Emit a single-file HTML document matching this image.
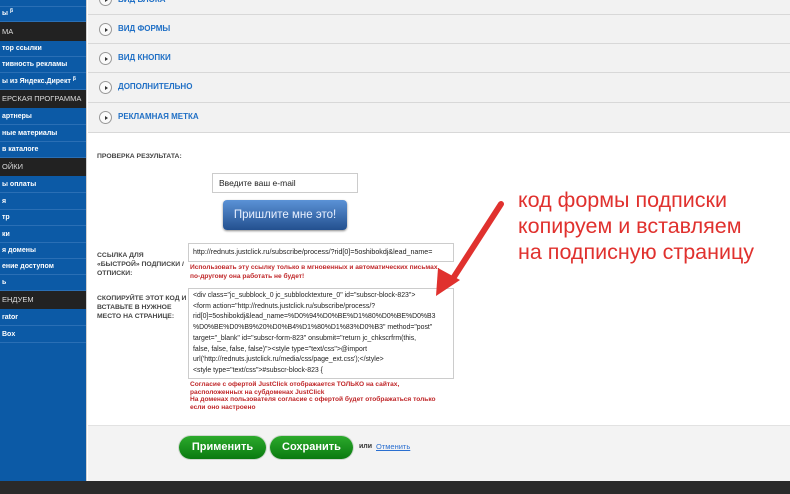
<!DOCTYPE html>
<html><head><meta charset="utf-8"><style>
*{margin:0;padding:0;box-sizing:border-box}
body{width:790px;height:494px;overflow:hidden;background:#fff;font-family:"Liberation Sans","Noto Sans CJK SC",sans-serif;position:relative}
.sb{position:absolute;left:0;top:0;width:87px;height:481px;background:#0c5aa6;border-right:1px solid #d0d0d0}
.sb div{position:absolute;left:0;width:86px;font-size:7px;font-weight:bold;color:#fff;padding-left:2px;white-space:nowrap;overflow:hidden;border-bottom:1px solid #2a6fb5}
.sb .h{background:#222;color:#ddd;font-size:7.5px;font-weight:normal;border-bottom:none}
.sb i{font-style:normal;font-size:5px;position:relative;top:-3px}
.acc{position:absolute;left:88px;width:702px;background:#f2f2f2;border-bottom:1px solid #d8d8d8}
.acc span.c{position:absolute;left:11px;width:13px;height:13px;border:1px solid #999;border-radius:50%;background:#fafafa}
.acc span.c:after{content:"";position:absolute;left:5px;top:3.5px;border-left:3px solid #333;border-top:2px solid transparent;border-bottom:2px solid transparent}
.acc b{position:absolute;left:30px;font-size:8px;color:#1f6fc5}
.lbl{position:absolute;font-size:6.8px;font-weight:bold;color:#444;line-height:9px;white-space:nowrap}
.red{position:absolute;font-size:7px;font-weight:bold;color:#c0282a;line-height:9px;white-space:nowrap}
.ta{position:absolute;background:#fff;border:1px solid #ccc;font-size:7.1px;color:#222;line-height:11px;padding:2px 4px;overflow:hidden;white-space:nowrap}
.gb{position:absolute;top:436px;height:23px;border-radius:12px;background:linear-gradient(#2caa2c,#0a7a10);color:#fff;font-weight:bold;font-size:11px;text-align:center;line-height:23px;box-shadow:0 0 0 1px #cfd8cf}
</style></head><body>
<div class="sb">
<div style="top:-2px;height:9px"></div>
<div style="top:7px;height:15px;line-height:14px">ы <i>β</i></div>
<div class="h" style="top:22px;height:19px;line-height:19px">МА</div>
<div style="top:41px;height:16px;line-height:16px">тор ссылки</div>
<div style="top:57px;height:16px;line-height:16px">тивность рекламы</div>
<div style="top:73px;height:17px;line-height:17px">ы из Яндекс.Директ <i>β</i></div>
<div class="h" style="top:90px;height:18px;line-height:18px">ЕРСКАЯ ПРОГРАММА</div>
<div style="top:108px;height:17px;line-height:17px">артнеры</div>
<div style="top:125px;height:17px;line-height:17px">ные материалы</div>
<div style="top:142px;height:16px;line-height:16px">в каталоге</div>
<div class="h" style="top:158px;height:18px;line-height:18px">ОЙКИ</div>
<div style="top:176px;height:17px;line-height:17px">ы оплаты</div>
<div style="top:193px;height:17px;line-height:17px">я</div>
<div style="top:210px;height:16px;line-height:16px">тр</div>
<div style="top:226px;height:17px;line-height:17px">ки</div>
<div style="top:243px;height:16px;line-height:16px">я домены</div>
<div style="top:259px;height:16px;line-height:16px">ение доступом</div>
<div style="top:275px;height:16px;line-height:16px">ь</div>
<div class="h" style="top:291px;height:18px;line-height:18px">ЕНДУЕМ</div>
<div style="top:309px;height:17px;line-height:17px">rator</div>
<div style="top:326px;height:17px;line-height:17px">Box</div>
</div>

<div class="acc" style="top:-15px;height:30px"><span class="c" style="top:8px"></span><b style="top:10px">ВИД БЛОКА</b></div>
<div class="acc" style="top:15px;height:29px"><span class="c" style="top:8px"></span><b style="top:9px">ВИД ФОРМЫ</b></div>
<div class="acc" style="top:44px;height:29px"><span class="c" style="top:8px"></span><b style="top:9px">ВИД КНОПКИ</b></div>
<div class="acc" style="top:73px;height:30px"><span class="c" style="top:8px"></span><b style="top:9px">ДОПОЛНИТЕЛЬНО</b></div>
<div class="acc" style="top:103px;height:30px"><span class="c" style="top:8px"></span><b style="top:9px">РЕКЛАМНАЯ МЕТКА</b></div>

<div class="lbl" style="left:97px;top:152px">ПРОВЕРКА РЕЗУЛЬТАТА:</div>
<div style="position:absolute;left:212px;top:173px;width:146px;height:20px;border:1px solid #ccc;font-size:8.5px;line-height:18px;padding-left:6px;color:#222">Введите ваш e-mail</div>
<div style="position:absolute;left:223px;top:200px;width:124px;height:30px;border-radius:4px;background:linear-gradient(#5b92d6,#23508f);color:#e8f0ff;font-size:11.5px;text-align:center;line-height:30px;box-shadow:0 1px 2px #888">Пришлите мне это!</div>

<div class="lbl" style="left:97px;top:251px">ССЫЛКА ДЛЯ<br>«БЫСТРОЙ» ПОДПИСКИ /<br>ОТПИСКИ:</div>
<div class="ta" style="left:188px;top:243px;width:266px;height:19px;line-height:13px">http://rednuts.justclick.ru/subscribe/process/?rid[0]=5oshibokdj&amp;lead_name=</div>
<div class="red" style="left:190px;top:263px;font-size:6.6px">Использовать эту ссылку только в мгновенных и автоматических письмах,<br>по-другому она работать не будет!</div>

<div class="lbl" style="left:97px;top:294px">СКОПИРУЙТЕ ЭТОТ КОД И<br>ВСТАВЬТЕ В НУЖНОЕ<br>МЕСТО НА СТРАНИЦЕ:</div>
<div class="ta" style="left:188px;top:288px;width:266px;height:91px;line-height:10.7px;font-size:6.9px">&lt;div class="jc_subblock_0 jc_subblocktexture_0" id="subscr-block-823"&gt;<br>&lt;form action="http://rednuts.justclick.ru/subscribe/process/?<br>rid[0]=5oshibokdj&amp;lead_name=%D0%94%D0%BE%D1%80%D0%BE%D0%B3<br>%D0%BE%D0%B9%20%D0%B4%D1%80%D1%83%D0%B3" method="post"<br>target="_blank" id="subscr-form-823" onsubmit="return jc_chkscrfrm(this,<br>false, false, false, false)"&gt;&lt;style type="text/css"&gt;@import<br>url('http://rednuts.justclick.ru/media/css/page_ext.css');&lt;/style&gt;<br>&lt;style type="text/css"&gt;#subscr-block-823 {<br>&nbsp;&nbsp;&nbsp;&nbsp;width:300px;</div>
<div class="red" style="left:190px;top:381px;line-height:7.6px;font-size:6.6px">Согласие с офертой JustClick отображается ТОЛЬКО на сайтах,<br>расположенных на субдоменах JustClick<br>На доменах пользователя согласие с офертой будет отображаться только<br>если оно настроено</div>

<div style="position:absolute;left:88px;top:425px;width:702px;height:56px;background:#f3f3f3;border-top:1px solid #e2e2e2"></div>
<div class="gb" style="left:179px;width:87px">Применить</div>
<div class="gb" style="left:270px;width:83px">Сохранить</div>
<div style="position:absolute;left:359px;top:443px;font-size:7px;font-weight:bold;color:#333">или</div>
<div style="position:absolute;left:376px;top:442px;font-size:7.5px;color:#2a6fd0;text-decoration:underline">Отменить</div>
<div style="position:absolute;left:0;top:481px;width:790px;height:13px;background:#2a2a2a"></div>

<div style="position:absolute;left:518px;top:187px;font-size:21.5px;line-height:26px;color:#e0312e;white-space:nowrap">код формы подписки<br>копируем и вставляем<br>на подписную страницу</div>
<svg style="position:absolute;left:0;top:0" width="790" height="494">
<line x1="501" y1="204" x2="452" y2="280" stroke="#e0312e" stroke-width="6" stroke-linecap="round"/>
<polygon points="436,296 438,268 460,280" fill="#e0312e"/>
</svg>
</body></html>
